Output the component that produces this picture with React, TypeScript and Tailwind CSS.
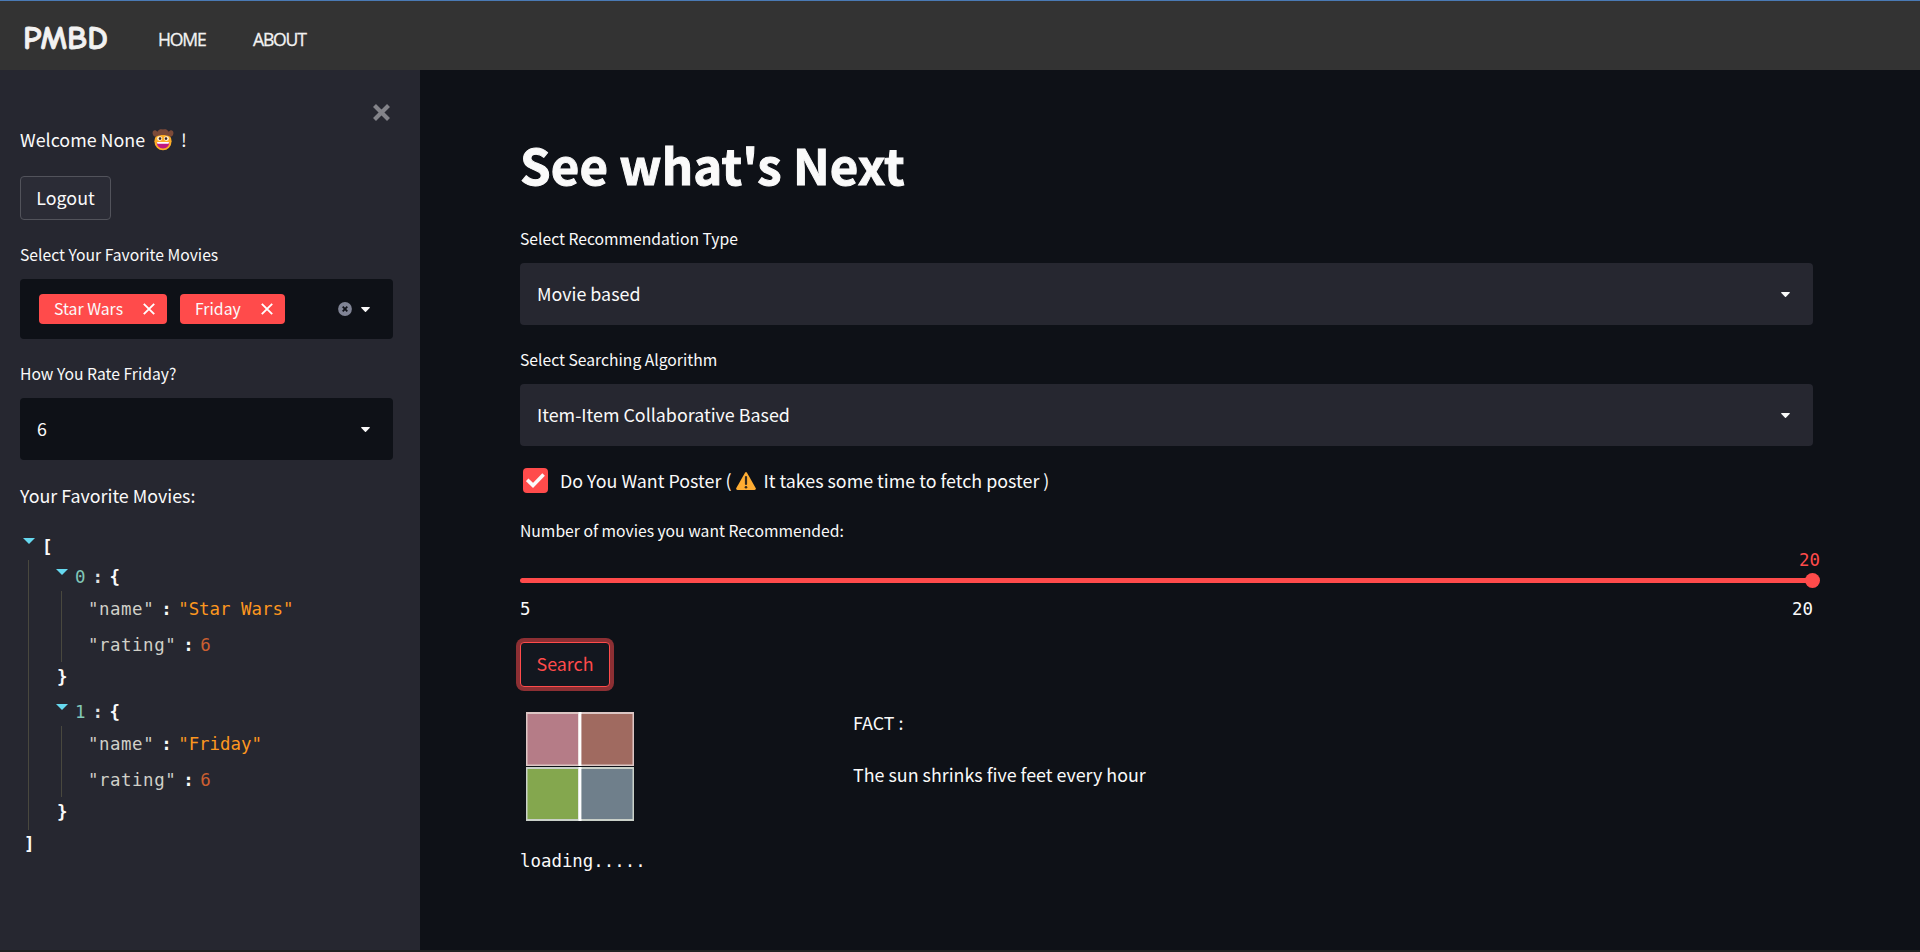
import type { ReactNode } from "react";

const mono = "font-['DejaVu_Sans_Mono',monospace]";

function Caret() {
  return (
    <svg className="h-[5px] w-[9px] shrink-0" viewBox="0 0 9 5" fill="#fafafa">
      <path d="M0.6 0H8.4Q9.2 0.2 8.6 1L5 4.7Q4.5 5.1 4 4.7L0.4 1Q-0.2 0.2 0.6 0Z" />
    </svg>
  );
}

function Cowboy() {
  return (
    <svg className="ml-[7px] h-[22px] w-[22px] shrink-0" viewBox="0 0 22 22">
      <ellipse cx="11" cy="12.3" rx="8.6" ry="9" fill="#fdad27" />
      <path
        d="M0.6 4.5C0.2 2 2.4 0.6 4.2 1.8 5 2.3 5.4 2.6 6 2.2 6.6 0.4 9 -0.1 11 0.6 13 -0.1 15.4 0.4 16 2.2 16.6 2.6 17 2.3 17.8 1.8 19.6 0.6 21.8 2 21.4 4.5 21 7 19 8.3 17.6 7.6 13.5 5.6 8.5 5.6 4.4 7.6 3 8.3 1 7 0.6 4.5Z"
        fill="#7c4a38"
      />
      <ellipse cx="7.6" cy="9.6" rx="2.5" ry="2.3" fill="#fff4dc" />
      <ellipse cx="14.4" cy="9.6" rx="2.5" ry="2.3" fill="#fff4dc" />
      <circle cx="8" cy="9.6" r="1.3" fill="#3a2226" />
      <circle cx="14" cy="9.6" r="1.3" fill="#3a2226" />
      <path d="M4.8 13.2H17.2C17.2 17.2 14.6 19.4 11 19.4S4.8 17.2 4.8 13.2Z" fill="#c2187f" />
      <path d="M5 13H17L16.6 14.8H5.4Z" fill="#fff" />
    </svg>
  );
}

function Tag({ label, width }: { label: string; width: string }) {
  return (
    <div className={`flex h-[30px] items-center justify-between rounded bg-[#ff4b4b] pr-[12px] pl-[15px] text-[15.8px] ${width}`}>
      <span className="whitespace-nowrap">{label}</span>
      <svg className="h-3 w-3" viewBox="0 0 12 12" stroke="#fff" strokeWidth="1.9">
        <path d="M0.8 0.8L11.2 11.2M11.2 0.8L0.8 11.2" />
      </svg>
    </div>
  );
}

function Select({ value, dark }: { value: string; dark?: boolean }) {
  return (
    <div className={`flex h-[62px] items-center justify-between rounded-[4px] pr-[23.5px] pl-[17px] ${dark ? "bg-[#0e1117]" : "bg-[#262730]"}`}>
      <span>{value}</span>
      <Caret />
    </div>
  );
}

function Triangle() {
  return (
    <svg className="h-[6px] w-[12px] shrink-0" viewBox="0 0 12 6" fill="#66d9ef">
      <path d="M0 0H12L6 6Z" />
    </svg>
  );
}

function Row({ name, children }: { name: string; children: ReactNode }) {
  return (
    <div className="flex h-[35.5px] items-center pt-[2px] whitespace-pre">
      <span className="tracking-[0.55px] text-[#d0d0c8]">"{name}"</span>
      <b className="w-[24px] pl-[7px]">:</b>
      {children}
    </div>
  );
}

function Entry({ index, name, rating }: { index: number; name: string; rating: number }) {
  return (
    <div className="h-[135px]">
      <div className="flex h-[31px] items-start pl-[28px]">
        <div className="pt-[9px]"><Triangle /></div>
        <div className="flex h-[31px] items-center pt-[4px] pl-[7px] leading-none">
          <span className="text-[#81c8b8]">{index}</span>
          <b className="w-[24px] pl-[7px] text-[#e0e0e0]">:</b>
          <b>{"{"}</b>
        </div>
      </div>
      <div className="ml-[33px] h-[71px] border-l border-[#49483e] pl-[26px]">
        <Row name="name">
          <span className="text-[#fd971f]">"{name}"</span>
        </Row>
        <Row name="rating">
          <span className="text-[#cc5f31]">{rating}</span>
        </Row>
      </div>
      <b className="ml-[29px] flex h-[30px] items-center pt-[2px]">{"}"}</b>
    </div>
  );
}

function Sidebar() {
  return (
    <aside className="h-[880px] w-[420px] shrink-0 bg-[#262730] pt-[34px] pr-[27px] pl-5">
      <div className="flex h-[17px] justify-end pr-[3px]">
        <svg className="h-[17px] w-[17px]" viewBox="0 0 17 17" stroke="#838389" strokeWidth="4.2">
          <path d="M1.5 1.5L15.5 15.5M15.5 1.5L1.5 15.5" />
        </svg>
      </div>
      <div className="mt-[5px] flex h-[28px] items-center">
        <span className="leading-none">Welcome None</span>
        <Cowboy />
        <span className="pl-[7px] leading-none">!</span>
      </div>
      <button className="mt-[22px] flex h-[44px] w-[91px] items-center justify-center rounded-[4px] border border-[#52535b] bg-[#2b2c36]">
        Logout
      </button>
      <div className="mt-[25px] flex h-[20px] items-center text-[15.7px]">Select Your Favorite Movies</div>
      <div className="mt-[14px] flex h-[60px] items-center rounded-[4px] bg-[#0e1117] pr-[23.5px] pl-[19px]">
        <div className="flex grow gap-[13px]">
          <Tag label="Star Wars" width="w-[128px]" />
          <Tag label="Friday" width="w-[105px]" />
        </div>
        <svg className="mr-[9px] h-[14px] w-[14px]" viewBox="0 0 14 14">
          <circle cx="7" cy="7" r="6.9" fill="#808495" />
          <path d="M4.7 4.7L9.3 9.3M9.3 4.7L4.7 9.3" stroke="#0e1117" strokeWidth="1.8" />
        </svg>
        <Caret />
      </div>
      <div className="mt-[25px] flex h-[20px] items-center text-[15.7px]">How You Rate Friday?</div>
      <div className="mt-[14px]">
        <Select value="6" dark />
      </div>
      <div className="mt-[26px] flex h-[20px] items-center">Your Favorite Movies:</div>
      <div className={`mt-[26px] text-[17.4px] leading-none ${mono}`}>
        <div className="flex h-[28px] items-start pl-[3px]">
          <div className="pt-[6px]"><Triangle /></div>
          <b className="pt-[7px] pl-[7px]">[</b>
        </div>
        <div className="ml-[8px] h-[270px] border-l border-[#49483e]">
          <div className="-ml-px">
            <Entry index={0} name="Star Wars" rating={6} />
            <Entry index={1} name="Friday" rating={6} />
          </div>
        </div>
        <b className="flex h-[28px] items-center pt-[2px] pl-[4px]">]</b>
      </div>
    </aside>
  );
}

function Loader() {
  return (
    <svg className="h-[110px] w-[108px]" viewBox="0 0 108 110">
      <rect width="108" height="54" fill="#dcc6c4" />
      <rect y="55" width="108" height="54" fill="#c9d0c8" />
      <path d="M54 0V54M54 55V109" stroke="#fff" strokeWidth="3" />
      <rect x="1.5" y="2" width="50.5" height="50.5" fill="#b57c87" />
      <rect x="55.5" y="2" width="51" height="50.5" fill="#a06a60" />
      <rect x="1.5" y="57" width="50.5" height="50" fill="#84a74e" />
      <rect x="55.5" y="57" width="51" height="50" fill="#6f7f8b" />
    </svg>
  );
}

function Slider() {
  return (
    <div className={`text-[17.4px] leading-none ${mono}`}>
      <div className="-mr-[7px] flex h-[20px] items-center justify-end pt-[2px] text-[#ff4b4b]">20</div>
      <div className="mt-[3px] flex h-[15px] items-center">
        <div className="h-[5px] grow rounded-[3px] bg-[#ff4b4b]" />
        <div className="-mr-[7px] -ml-[8px] h-[15px] w-[15px] rounded-full bg-[#ff4b4b]" />
      </div>
      <div className="mt-[10px] flex h-[20px] items-center justify-between pt-[3px]">
        <span>5</span>
        <span>20</span>
      </div>
    </div>
  );
}

function Content() {
  return (
    <main className="w-[1393px] pt-[59px] pl-[100px]">
      <h1 className="flex h-[70px] items-center text-[49.1px] leading-none font-bold tracking-[0.12px] [-webkit-text-stroke:1px_#fafafa]">See what's Next</h1>
      <div className="mt-[30px] flex h-[20px] items-center text-[15.7px]">Select Recommendation Type</div>
      <div className="mt-[14px]">
        <Select value="Movie based" />
      </div>
      <div className="mt-[25px] flex h-[20px] items-center text-[15.7px]">Select Searching Algorithm</div>
      <div className="mt-[14px]">
        <Select value="Item-Item Collaborative Based" />
      </div>
      <div className="mt-[22px] flex h-[25px] items-center pl-[3px]">
        <div className="flex h-[25px] w-[25px] items-center justify-center rounded-[4px] bg-[#ff4b4b]">
          <svg className="h-[15px] w-[19px]" viewBox="0 0 19 15" fill="none" stroke="#fafafa" strokeWidth="3.6">
            <path d="M1.2 6.8L7 12.4L17.6 1.6" />
          </svg>
        </div>
        <span className="pl-[12px] whitespace-nowrap">Do You Want Poster (</span>
        <svg className="ml-[5px] h-[18px] w-[20px]" viewBox="0 0 20 18">
          <path d="M9 0.8Q10 -0.6 11 0.8L19.8 16.2Q20.2 17.8 18.6 18H1.4Q-0.2 17.8 0.2 16.2Z" fill="#ffad33" />
          <path d="M10 5V12" stroke="#33291f" strokeWidth="2.2" strokeLinecap="round" />
          <circle cx="10" cy="15.3" r="1.3" fill="#33291f" />
        </svg>
        <span className="pl-[7px] whitespace-nowrap">It takes some time to fetch poster )</span>
      </div>
      <div className="mt-[28px] flex h-[20px] items-center text-[15.7px]">Number of movies you want Recommended:</div>
      <div className="mt-[9px]">
        <Slider />
      </div>
      <button className="mt-[24px] flex h-[45px] w-[90px] items-center justify-center rounded-[4px] border border-[#ff4b4b] bg-[#13171f] pb-[2px] text-[#ff4b4b] ring-4 ring-[#8c2f33]">
        Search
      </button>
      <div className="mt-[25px] flex h-[111px]">
        <div className="w-[333px] pl-[6px]">
          <Loader />
        </div>
        <div className="leading-none">
          <p className="flex h-[22px] items-center">FACT :</p>
          <p className="mt-[30px] flex h-[22px] items-center">The sun shrinks five feet every hour</p>
        </div>
      </div>
      <p className={`mt-[29px] flex h-[20px] items-center text-[17.4px] ${mono}`}>loading.....</p>
    </main>
  );
}

export default function App() {
  return (
    <div className="h-[952px] overflow-hidden bg-[#0e1117] font-['Noto_Sans_CJK_SC',sans-serif] text-[17.88px] leading-none text-[#fafafa]">
      <header className="flex h-[70px] items-center border-t border-[#4a7ab5] bg-[#333333] pl-[23px] text-[#f2f2f2]">
        <span className="w-[135px] pt-[6px] font-['Comic_Neue','Comic_Sans_MS',Lato,cursive] text-[33px] font-bold [-webkit-text-stroke:0.8px_#f2f2f2]">PMBD</span>
        <nav className="flex pt-[8px] font-['Open_Sans',sans-serif] text-[17.6px] font-medium tracking-[-1.2px] [-webkit-text-stroke:0.3px_#f2f2f2]">
          <a className="w-[95px]">HOME</a>
          <a>ABOUT</a>
        </nav>
      </header>
      <div className="flex h-[880px]">
        <Sidebar />
        <Content />
      </div>
      <div className="h-[2px] bg-[#222222]" />
    </div>
  );
}
